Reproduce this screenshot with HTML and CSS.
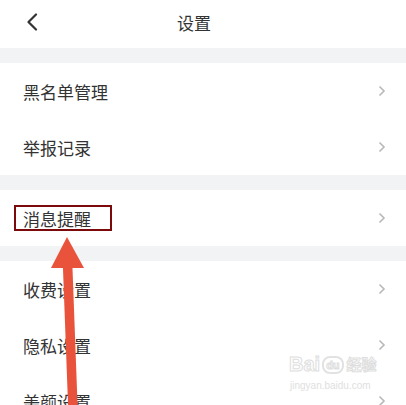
FILE: index.html
```html
<!DOCTYPE html>
<html lang="zh-CN">
  <head>
    <meta charset="UTF-8" />
    <meta name="viewport" content="width=device-width, initial-scale=1.0" />
    <title>设置</title>
    <link rel="stylesheet" href="styles.css">
  </head>
  <body>
    <div class="page">
      <div class="header">
        <svg class="back" width="12" height="18" viewBox="0 0 12 18">
          <path d="M10 1.5 L2.5 9 L10 16.5" fill="none" stroke="#333" stroke-width="2.2" stroke-linecap="round" stroke-linejoin="round"/>
        </svg>
        <span class="title">设置</span>
      </div>

      <div class="gap"></div>
      <div class="group">
        <div class="row"><span>黑名单管理</span><svg class="chev" width="8" height="12" viewBox="0 0 8 12"><path d="M1.5 1.5 L6 6 L1.5 10.5" fill="none" stroke="#b8b8b8" stroke-width="1.6"/></svg></div>
        <div class="row"><span>举报记录</span><svg class="chev" width="8" height="12" viewBox="0 0 8 12"><path d="M1.5 1.5 L6 6 L1.5 10.5" fill="none" stroke="#b8b8b8" stroke-width="1.6"/></svg></div>
      </div>

      <div class="gap"></div>
      <div class="group">
        <div class="row"><span>消息提醒</span><svg class="chev" width="8" height="12" viewBox="0 0 8 12"><path d="M1.5 1.5 L6 6 L1.5 10.5" fill="none" stroke="#b8b8b8" stroke-width="1.6"/></svg></div>
      </div>

      <div class="gap"></div>
      <div class="group">
        <div class="row"><span>收费设置</span><svg class="chev" width="8" height="12" viewBox="0 0 8 12"><path d="M1.5 1.5 L6 6 L1.5 10.5" fill="none" stroke="#b8b8b8" stroke-width="1.6"/></svg></div>
        <div class="row"><span>隐私设置</span><svg class="chev" width="8" height="12" viewBox="0 0 8 12"><path d="M1.5 1.5 L6 6 L1.5 10.5" fill="none" stroke="#b8b8b8" stroke-width="1.6"/></svg></div>
        <div class="row"><span>美颜设置</span><svg class="chev" width="8" height="12" viewBox="0 0 8 12"><path d="M1.5 1.5 L6 6 L1.5 10.5" fill="none" stroke="#b8b8b8" stroke-width="1.6"/></svg></div>
      </div>

      <!-- annotation overlays -->
      <div class="highlight"></div>
      <svg class="arrow" width="406" height="405" viewBox="0 0 406 405">
        <line x1="67.5" y1="262" x2="73" y2="410" stroke="#e9533c" stroke-width="9.5"/>
        <polygon points="67,237 51,268 84,268" fill="#e9533c"/>
      </svg>

      <div class="watermark">
        <div class="wm-logo">Bai<span class="wm-du">du</span><span class="wm-cn">经验</span></div>
        <div class="wm-url">jingyan.baidu.com</div>
      </div>
    </div>
  </body>
</html>
```

FILE: styles.css
```css
body {
  margin: 0;
  background-color: #ffffff;
  font-family: "Noto Sans CJK SC", "Noto Sans", sans-serif;
  color: #333333;
  overflow: hidden;
}

.page {
  position: relative;
  width: 406px;
  height: 405px;
  overflow: hidden;
}

.header {
  height: 48px;
  display: flex;
  align-items: center;
  justify-content: center;
  position: relative;
}

.back {
  position: absolute;
  left: 26px;
  top: 13px;
}

.title {
  font-size: 17px;
  color: #333333;
  margin-left: -18px;
  margin-top: -4px;
}

.gap {
  height: 15px;
  background-color: #f2f3f5;
}

.row {
  height: 56px;
  display: flex;
  align-items: center;
  justify-content: space-between;
  padding: 0 20px 0 23px;
  font-size: 17px;
  color: #333333;
}

.chev {
  display: block;
}

.highlight {
  position: absolute;
  left: 14px;
  top: 205px;
  width: 94px;
  height: 22px;
  border: 2px solid #7d0a0a;
}

.arrow {
  position: absolute;
  left: 0;
  top: 0;
}

.watermark {
  position: absolute;
  left: 289px;
  top: 354px;
  color: #ffffff;
  line-height: 1;
  white-space: nowrap;
}

.wm-logo {
  font-family: "Liberation Sans", sans-serif;
  font-size: 20px;
  font-weight: bold;
  -webkit-text-stroke: 1px #dedede;
}

.wm-du {
  font-size: 11px;
  color: #ffffff;
  border: 2px solid #e2e2e2;
  border-radius: 8px;
  padding: 1px 2px;
  margin: 0 3px 0 2px;
  vertical-align: 2px;
}

.wm-cn {
  font-family: "Noto Sans CJK SC", sans-serif;
  font-size: 15px;
  vertical-align: 1px;
}

.wm-url {
  font-family: "Liberation Sans", sans-serif;
  font-size: 10px;
  font-weight: normal;
  color: #e0e0e0;
  margin-top: 7px;
  margin-left: 1px;
}
```
